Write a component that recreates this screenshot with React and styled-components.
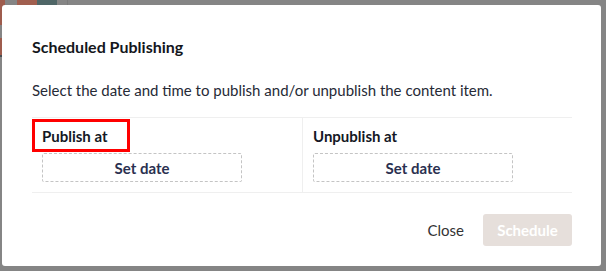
import React from "react";
import styled, { createGlobalStyle } from "styled-components";

const GlobalStyle = createGlobalStyle`
  html, body {
    margin: 0;
    padding: 0;
    width: 606px;
    height: 271px;
    overflow: hidden;
    font-family: Lato, "Open Sans", sans-serif;
  }
`;

// dimmed page behind the dialog
const Backdrop = styled.div`
  position: relative;
  width: 606px;
  height: 271px;
  background: #858585;
  display: flex;
  align-items: flex-start;
`;

const EdgeColumn = styled.div`
  display: flex;
  flex-direction: column;
  width: 5px;
`;

const TopRow = styled.div`
  display: flex;
`;

const Tile = styled.div`
  width: ${p => p.w}px;
  height: ${p => p.h}px;
  background: ${p => p.color};
`;

const Modal = styled.div`
  position: absolute;
  left: 2px;
  top: 5px;
  width: 599px;
  height: 261px;
  box-sizing: border-box;
  background: #fff;
  border-radius: 3px;
  padding: 32px 29px 20px 30px;
  display: flex;
  flex-direction: column;
`;

const Title = styled.h2`
  margin: 0;
  font-size: 16px;
  line-height: 20px;
  font-weight: 700;
  color: #14161c;
`;

const Description = styled.p`
  margin: 23px 0 0;
  font-size: 15px;
  line-height: 20px;
  color: #262a36;
`;

const Table = styled.div`
  margin-top: 17px;
  display: grid;
  grid-template-columns: 270px 1fr;
  border-top: 1px solid #efefef;
  border-bottom: 1px solid #efefef;
`;

const Cell = styled.div`
  padding: 8px 10px 10px;
  display: flex;
  flex-direction: column;
  gap: 7px;
  border-left: ${p => (p.divided ? "1px solid #efefef" : "none")};
`;

const Label = styled.div`
  position: relative;
  font-size: 15px;
  line-height: 20px;
  font-weight: 700;
  color: #141824;

  &::before {
    content: "";
    display: ${p => (p.highlighted ? "block" : "none")};
    position: absolute;
    left: -10px;
    top: -7px;
    width: 98px;
    height: 33px;
    box-sizing: border-box;
    border: 3px solid #ff0000;
  }
`;

const DateButton = styled.button`
  width: 200px;
  height: 29px;
  box-sizing: border-box;
  border: 1px dashed #c4c4c4;
  border-radius: 2px;
  background: #fff;
  font-family: inherit;
  font-size: 15px;
  font-weight: 700;
  color: #2a3050;
  padding: 0;
  cursor: pointer;
`;

const Footer = styled.div`
  margin-top: 21px;
  display: flex;
  justify-content: flex-end;
  align-items: center;
  gap: 9px;
`;

const TextButton = styled.button`
  border: none;
  background: none;
  padding: 0 10px;
  height: 32px;
  font-family: inherit;
  font-size: 15px;
  color: #333;
  cursor: pointer;
`;

const PrimaryButton = styled.button`
  width: 89px;
  height: 32px;
  border: none;
  border-radius: 3px;
  background: ${p => (p.disabled ? "#e6dfdb" : "#8c5a4a")};
  color: #fff;
  font-family: inherit;
  font-size: 15px;
  font-weight: 700;
  padding: 0;
`;

const edgeTiles = [
  { h: 25, color: "#9e5c4d" },
  { h: 13, color: "#858585" },
  { h: 17, color: "#9e5c4d" },
  { h: 2, color: "#4a4f52" },
];

const topTiles = [
  { w: 12, color: "#858585" },
  { w: 20, color: "#a15f4f" },
  { w: 20, color: "#4f6667" },
  { w: 10, color: "#858585" },
  { w: 1, color: "#7a7a7a" },
];

export default function App() {
  return (
    <>
      <GlobalStyle />
      <Backdrop>
        <EdgeColumn>
          {edgeTiles.map((t, i) => (
            <Tile key={i} w={5} h={t.h} color={t.color} />
          ))}
        </EdgeColumn>
        <TopRow>
          {topTiles.map((t, i) => (
            <Tile key={i} w={t.w} h={20} color={t.color} />
          ))}
        </TopRow>

        <Modal>
          <Title>Scheduled Publishing</Title>
          <Description>
            Select the date and time to publish and/or unpublish the content item.
          </Description>

          <Table>
            <Cell>
              <Label highlighted>Publish at</Label>
              <DateButton>Set date</DateButton>
            </Cell>
            <Cell divided>
              <Label>Unpublish at</Label>
              <DateButton>Set date</DateButton>
            </Cell>
          </Table>

          <Footer>
            <TextButton>Close</TextButton>
            <PrimaryButton disabled>Schedule</PrimaryButton>
          </Footer>
        </Modal>
      </Backdrop>
    </>
  );
}
